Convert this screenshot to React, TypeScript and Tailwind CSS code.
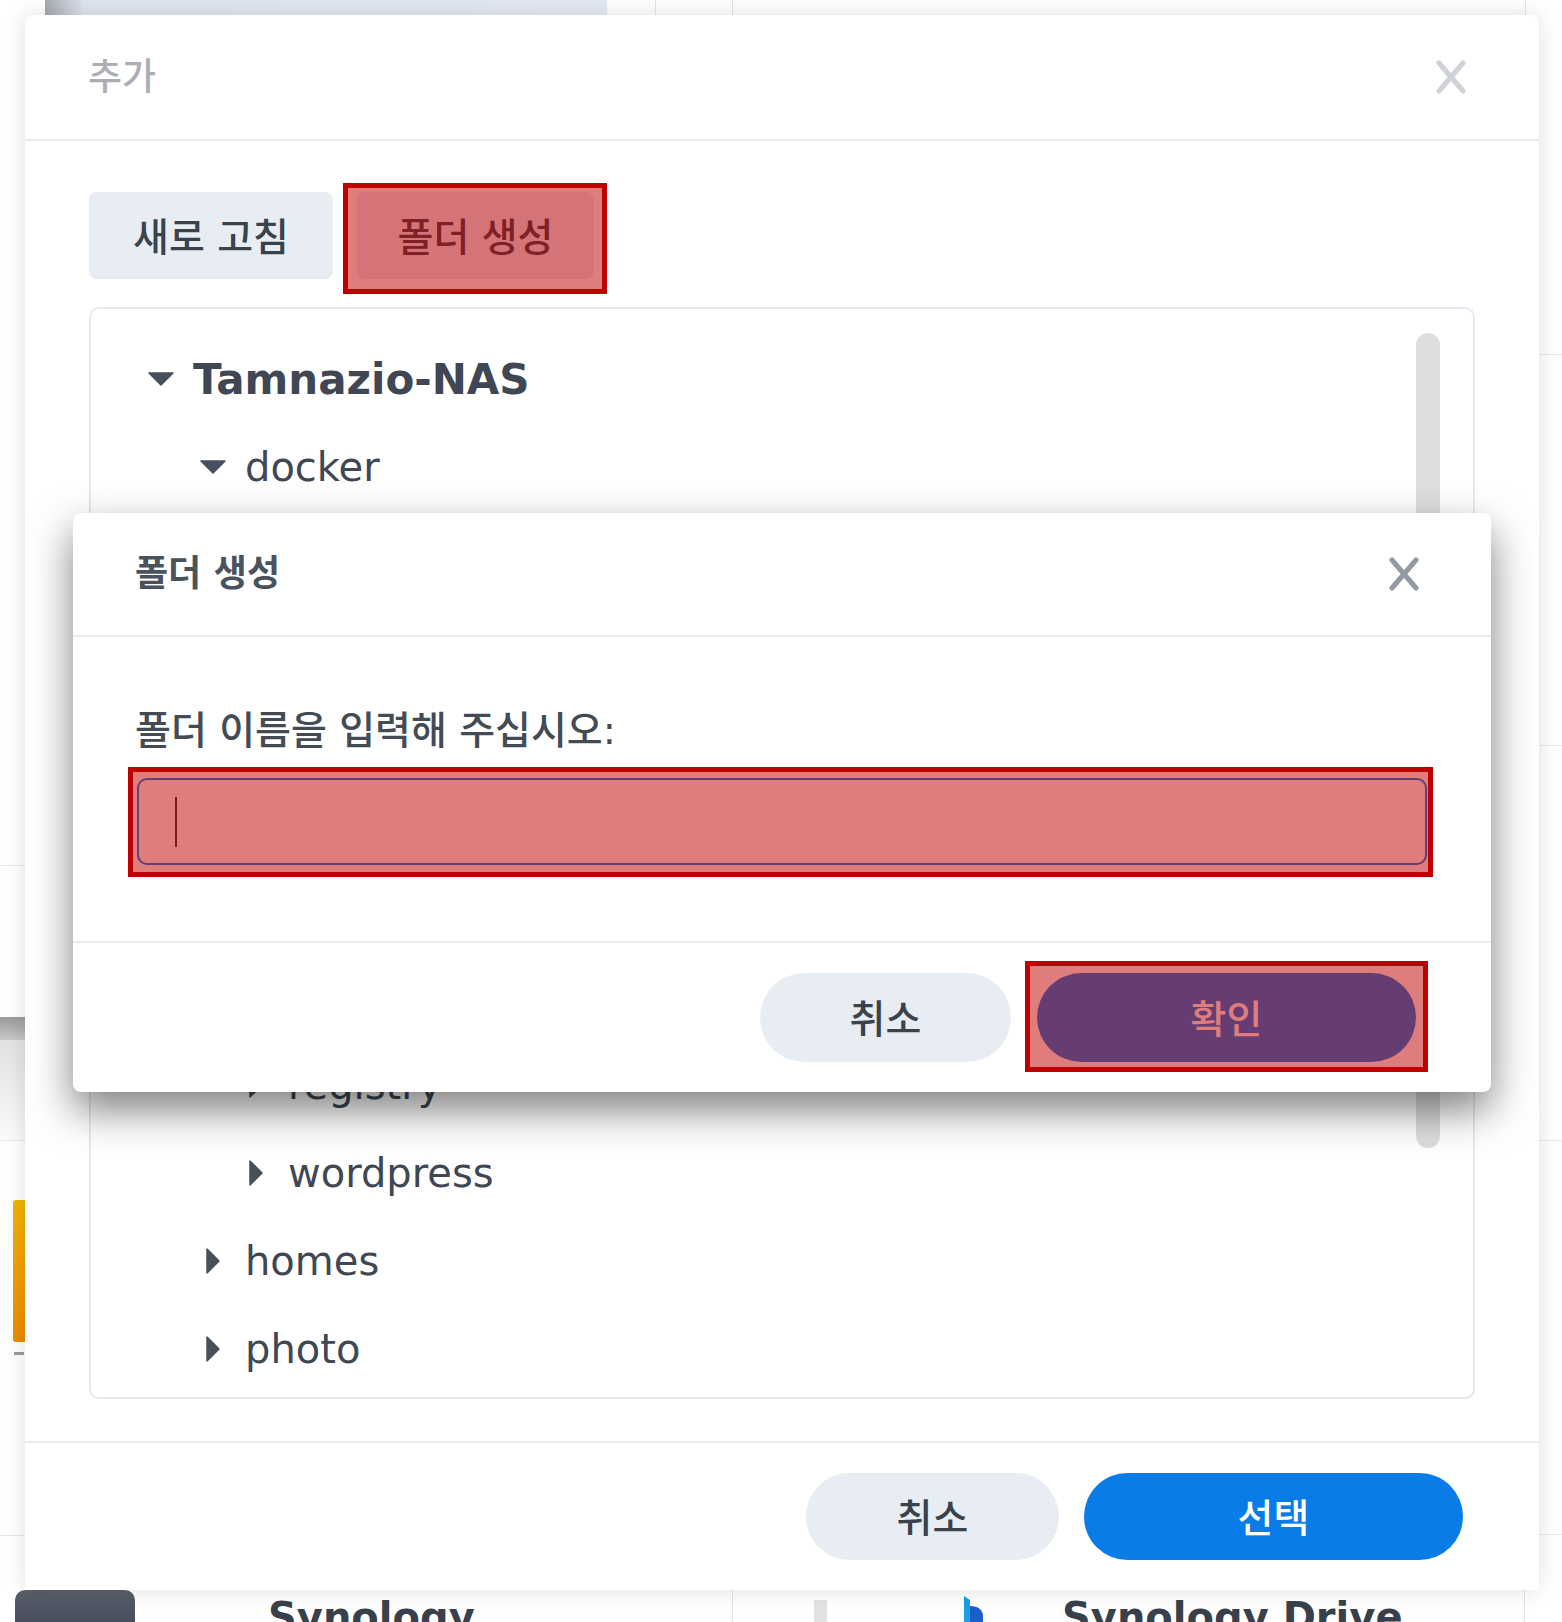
import React from 'react';

// folder tree shown in the "추가" dialog (rows under docker are covered by the modal)
const rows: { level: number; name: string; open?: boolean; root?: boolean }[] = [
  { level: 0, name: 'Tamnazio-NAS', open: true, root: true },
  { level: 1, name: 'docker', open: true },
  { level: 2, name: 'gitlab' },
  { level: 2, name: 'jenkins' },
  { level: 2, name: 'mariadb' },
  { level: 2, name: 'nextcloud' },
  { level: 2, name: 'portainer' },
  { level: 2, name: 'redis' },
  { level: 2, name: 'registry' },
  { level: 2, name: 'wordpress' },
  { level: 1, name: 'homes' },
  { level: 1, name: 'photo' },
  { level: 1, name: 'video' },
  { level: 1, name: 'web' },
];

const indent = ['pl-[56px]', 'pl-[108px]', 'pl-[151px]'];

const CloseX: React.FC<{ color: string }> = ({ color }) => (
  <svg width="34" height="34" viewBox="0 0 34 34">
    <path d="M5 3 L29 31 M29 3 L5 31" stroke={color} strokeWidth="5" strokeLinecap="round" />
  </svg>
);

const Caret: React.FC<{ open?: boolean }> = ({ open }) =>
  open ? (
    <svg width="26" height="14" viewBox="0 0 26 14">
      <path d="M1 1 H25 L13 13 Z" fill="#46505c" stroke="#46505c" strokeWidth="1.5" strokeLinejoin="round" />
    </svg>
  ) : (
    <svg width="14" height="26" viewBox="0 0 14 26">
      <path d="M1 1 L13 13 L1 25 Z" fill="#46505c" stroke="#46505c" strokeWidth="1.5" strokeLinejoin="round" />
    </svg>
  );

// red annotation box drawn over a control
const Highlight: React.FC<{ pos: string }> = ({ pos }) => (
  <span className={`pointer-events-none absolute border-[5px] border-[#c00000] bg-[rgba(192,0,0,0.51)] ${pos}`} />
);

const Background: React.FC = () => (
  <div className="flex h-full w-full flex-col">
    {/* top edge of the page behind */}
    <div className="flex h-[15px] shrink-0">
      <div className="w-[45px]" />
      <div className="w-[562px] bg-[linear-gradient(90deg,#a4a9b1_0%,#dfe5ef_7%,#e4eaf4_100%)]" />
      <div className="w-[48px]" />
      <div className="w-[77px] border-l border-[#e4e4e4]" />
      <div className="w-[793px] border-l border-[#e4e4e4]" />
      <div className="flex-1 border-l border-[#e4e4e4]" />
    </div>

    <div className="flex h-[1575px] shrink-0">
      <div className="flex w-[25px] flex-col">
        <div className="h-[851px] border-b border-[#e6e6e6]" />
        <div className="h-[151px]" />
        <div className="h-[23px] bg-[linear-gradient(180deg,#9a9a9a,#c9c9c9)]" />
        <div className="h-[101px] border-b border-[#e6e6e6] bg-[linear-gradient(180deg,#e2e2e2,#fbfbfb)]" />
        <div className="flex h-[395px] flex-col border-b border-[#e6e6e6] pt-[59px]">
          <div className="ml-[13px] h-[142px] w-[12px] rounded-l-[3px] bg-[linear-gradient(180deg,#f4b400,#ee8a00)]" />
          <div className="ml-[14px] mt-[10px] h-[3px] w-[10px] bg-[#9a9a9a]" />
        </div>
        <div className="flex-1" />
      </div>
      <div className="flex-1" />
      <div className="flex w-[23px] flex-col">
        <div className="h-[340px] border-b border-[#e6e6e6]" />
        <div className="h-[391px] border-b border-[#e6e6e6]" />
        <div className="h-[395px] border-b border-[#e6e6e6]" />
        <div className="h-[394px] border-b border-[#e6e6e6]" />
      </div>
    </div>

    {/* bottom edge: package cards */}
    <div className="flex h-[32px] shrink-0 text-[40px] font-bold leading-none text-[#38404b]">
      <div className="w-[15px]" />
      <div className="h-[40px] w-[120px] rounded-t-[10px] bg-[linear-gradient(180deg,#5b606c,#42475a)]" />
      <div className="w-[133px]" />
      <div className="w-[464px] pt-[7px]">Synology</div>
      <div className="w-[82px] border-l border-[#e4e4e4]" />
      <div className="mt-[10px] h-[30px] w-[13px] bg-[#e2e2e2]" />
      <div className="w-[135px]" />
      <div className="flex w-[23px] items-end pt-[6px]">
        <svg width="23" height="26" viewBox="0 0 23 26">
          <path d="M2 0 L8 4 L8 26 L2 26 Z" fill="#1aa0e6" />
          <path d="M8 10 C16 10 21 14 21 20 L21 26 L8 26 Z" fill="#1c5fc9" />
        </svg>
      </div>
      <div className="w-[77px]" />
      <div className="w-[462px] pt-[7px]">Synology Drive</div>
      <div className="flex-1 border-l border-[#e4e4e4]" />
    </div>
  </div>
);

const FolderModal: React.FC = () => (
  <div className="absolute left-[48px] top-[498px] flex h-[579px] w-[1418px] flex-col rounded-[8px] bg-white shadow-[0_18px_42px_rgba(0,0,0,0.5)]">
    <div className="flex h-[124px] shrink-0 items-center justify-between border-b-2 border-[#e7ebf1] pl-[62px] pr-[70px]">
      <span className="text-[36px] font-bold leading-none text-[#4a525d]">폴더 생성</span>
      <CloseX color="#959ba2" />
    </div>

    <div className="flex shrink-0 flex-col px-[64px] pb-[76px] pt-[72px]">
      <span className="-ml-[2px] text-[39px] font-medium leading-[44px] text-[#434b55]">폴더 이름을 입력해 주십시오:</span>
      <div className="relative mt-[25px]">
        <div className="flex h-[87px] items-center rounded-[10px] border-2 border-[#0a7ce8] bg-white pl-[36px]">
          <div className="h-[50px] w-[2px] bg-[#3a3a3a]" />
        </div>
        <Highlight pos="left-[-9px] right-[-6px] top-[-11px] bottom-[-12px]" />
      </div>
    </div>

    <div className="flex flex-1 items-center justify-end gap-[26px] border-t-2 border-[#e7ebf1] pr-[75px]">
      <button className="h-[89px] w-[251px] rounded-full bg-[#e8edf4] pt-[4px] text-[39px] font-medium leading-none text-[#3a424c]">취소</button>
      <div className="relative">
        <button className="h-[89px] w-[379px] rounded-full bg-[#0a7ce8] pt-[4px] text-[39px] font-medium leading-none text-white">확인</button>
        <Highlight pos="left-[-12px] right-[-12px] top-[-12px] bottom-[-10px]" />
      </div>
    </div>
  </div>
);

export default function App() {
  return (
    <div className="relative h-[1622px] w-[1562px] overflow-hidden bg-white font-['DejaVu_Sans','Noto_Sans_CJK_KR',sans-serif]">
      <Background />

      {/* 추가 dialog */}
      <div className="absolute left-[25px] top-[15px] flex h-[1575px] w-[1514px] flex-col rounded-t-[8px] bg-white shadow-[0_0_22px_rgba(0,0,0,0.13)]">
        <div className="flex h-[126px] shrink-0 items-center justify-between border-b-2 border-[#e7ebf1] pl-[63px] pr-[71px]">
          <span className="text-[37px] font-medium leading-none text-[#abafb5]">추가</span>
          <CloseX color="#cfd2d6" />
        </div>

        <div className="flex shrink-0 flex-col px-[64px] pb-[42px] pt-[51px]">
          <div className="flex gap-[24px]">
            <button className="h-[87px] w-[244px] rounded-[8px] bg-[#e8edf4] pt-[4px] text-[39px] font-medium leading-none text-[#3a424c]">새로 고침</button>
            <div className="relative">
              <button className="h-[87px] w-[237px] rounded-[8px] bg-[#e8edf4] pt-[4px] text-[39px] font-medium leading-none text-[#3a424c]">폴더 생성</button>
              <Highlight pos="left-[-14px] right-[-13px] top-[-9px] bottom-[-15px]" />
            </div>
          </div>

          <div className="relative mt-[28px] flex h-[1092px] flex-col overflow-hidden rounded-[10px] border-2 border-[#e4e9f0] pt-[26px]">
            {rows.map((r) => (
              <div key={r.name} className={`flex h-[88.2px] shrink-0 items-center ${indent[r.level]}`}>
                <div className="flex w-[28px] justify-center">
                  <Caret open={r.open} />
                </div>
                <span
                  className={`ml-[18px] text-[#3e4753] ${r.root ? 'text-[42px] font-bold' : 'text-[40px] font-normal'}`}
                >
                  {r.name}
                </span>
              </div>
            ))}
            <div className="absolute right-[33px] top-[24px] h-[815px] w-[24px] rounded-full bg-[#dedede]" />
          </div>
        </div>

        <div className="flex flex-1 items-center justify-end gap-[25px] border-t-2 border-[#e7ebf1] pr-[76px]">
          <button className="h-[87px] w-[253px] rounded-full bg-[#e8edf4] pt-[4px] text-[39px] font-medium leading-none text-[#3a424c]">취소</button>
          <button className="h-[87px] w-[379px] rounded-full bg-[#0a7ce8] pt-[4px] text-[39px] font-medium leading-none text-white">선택</button>
        </div>

        <FolderModal />
      </div>
    </div>
  );
}
